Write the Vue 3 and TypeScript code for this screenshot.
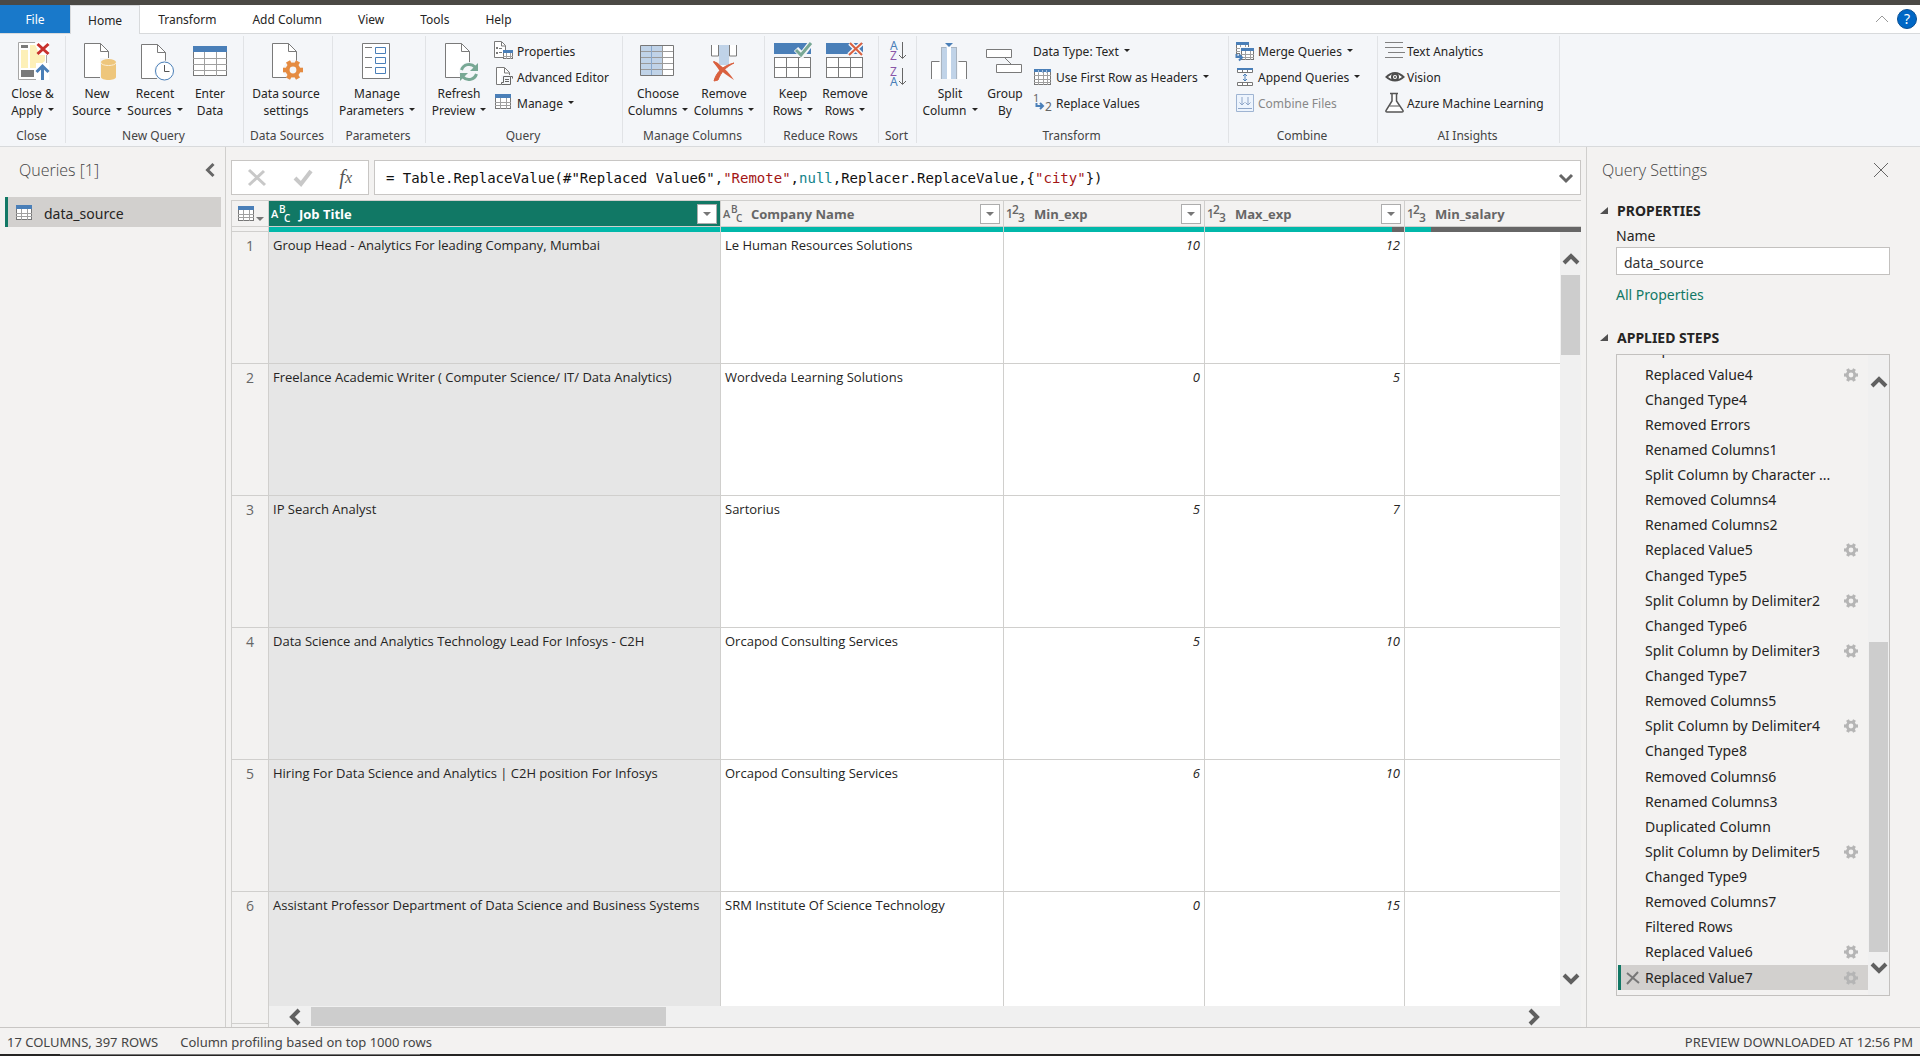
<script setup lang="ts">
import { ref } from 'vue'

interface BigButton { icon: string; lines: [string, string]; caret?: boolean; width: string }
interface SmallButton { icon?: string; label: string; caret?: boolean; disabled?: boolean }
interface Group { name: string; big?: BigButton[]; small?: SmallButton[]; sort?: boolean }
interface Column { name: string; kind: 'text' | 'number'; quality: string; filter: boolean }
interface Step { name: string; gear?: boolean }

const page = (x: number, y: number) =>
  `<path d="M${x + 0.5} ${y + 0.5}h16l8 8v26h-24z" fill="#fff" stroke="#7a7a7a"/><path d="M${x + 16.5} ${y + 0.5}v8h8" fill="none" stroke="#7a7a7a"/>`

const gear = (cx: number, cy: number, r: number, color: string) => {
  const tooth = r * 0.46
  const teeth = [0, 60, 120, 180, 240, 300]
    .map((a) => `<rect x="${cx + r * 0.5}" y="${cy - tooth / 2}" width="${r * 0.5}" height="${tooth}" transform="rotate(${a} ${cx} ${cy})" fill="${color}"/>`)
    .join('')
  return `${teeth}<circle cx="${cx}" cy="${cy}" r="${r * 0.54}" fill="none" stroke="${color}" stroke-width="${r * 0.4}"/>`
}

const sheet = (x: number, y: number, w: number, h: number, cols: number, rows: number) => {
  const head = Math.round(h / (rows + 1))
  let d = ''
  for (let i = 1; i < cols; i++) d += `M${Math.round(x + (w * i) / cols) + 0.5} ${y + head}V${y + h}`
  for (let i = 1; i < rows; i++) d += `M${x} ${Math.round(y + head + ((h - head) * i) / rows) + 0.5}h${w}`
  return `<rect x="${x + 0.5}" y="${y + 0.5}" width="${w - 1}" height="${h - 1}" fill="#fff" stroke="#777"/><path d="${d}" stroke="#a0a0a0" fill="none"/><rect x="${x}" y="${y}" width="${w}" height="${head}" fill="#4a7fb8"/>`
}

const grid3x2 = '<rect x="2.5" y="16.5" width="36" height="20" fill="#fff" stroke="#7a7a7a"/><path d="M14.5 16v20M26.5 16v20M2 26.5h36" stroke="#7a7a7a"/>'

const icons: Record<string, string> = {
  close: '<path d="M6.5 1.5h28v37h-28z" fill="#fff" stroke="#a6a6a6"/><rect x="9" y="4" width="7" height="3" fill="#7a7a7a"/><rect x="9" y="9" width="7" height="18" fill="#fdf0b8"/><path d="M18 4h5l4 6v4h6v6l-9 7h-6z" fill="#fdf0b8"/><rect x="9" y="29" width="13" height="7" fill="#7a7a7a"/><path d="M23 1h14v13H27zM24 22h13v17H24z" fill="#fff"/><path d="M25.500 3l11 10m0-10l-11 10" stroke="#c8322d" stroke-width="3"/><path d="M30.500 39V26M24.500 31l6-6 6 6" fill="none" stroke="#4a7fb8" stroke-width="3"/>',
  source: page(8, 2) + '<path d="M24 17h17v23H24z" fill="#f4f6f9"/><path d="M25 21v15c0 4 15 4 15 0V21z" fill="#eec67c"/><ellipse cx="32.500" cy="21" rx="7.500" ry="3" fill="#eec67c"/><path d="M25 21.500c0 4 15 4 15 0" stroke="#fbeed5" fill="none"/>',
  recent: page(7, 3) + '<circle cx="30.500" cy="30" r="10.500" fill="#f4f6f9"/><circle cx="30.500" cy="30" r="9" fill="#fff" stroke="#4a7fb8"/><path d="M30.500 24v6.500h5" fill="none" stroke="#555"/>',
  enter: sheet(4, 5, 34, 30, 3, 4),
  settings: page(7, 2) + '<circle cx="28" cy="29" r="10" fill="#f4f6f9"/>' + gear(28, 29, 10, '#e58b41'),
  params: '<path d="M6.500 2.500h27v35h-27z" fill="#fff" stroke="#7a7a7a"/><path d="M9 6.500h7M9 16.500h7M9 26.500h7" stroke="#7a7a7a"/><path d="M19.500 6.500h10v6h-10zM19.500 16.500h10v6h-10zM19.500 26.500h10v6h-10z" fill="#fff" stroke="#4a7fb8"/>',
  refresh: page(7, 2) + '<circle cx="31" cy="31" r="10" fill="#f4f6f9"/><path d="M23.500 29a8 8 0 0 1 13.500-3M38.500 33a8 8 0 0 1-13.500 3" fill="none" stroke="#78a895" stroke-width="3"/><path d="M40 22v8h-8zM22 40v-8h8z" fill="#78a895"/>',
  choose: '<path d="M3.500 4.500h33v30h-33z" fill="#fff" stroke="#777"/><path d="M4 5h22v29H4z" fill="#c0d3e8"/><path d="M4 10.500h32M4 16.500h32M4 22.500h32M4 28.500h32M25.500 5v29" stroke="#9a9a9a"/><path d="M14.500 5v29" stroke="#88a8cd"/>',
  removeCols: '<path d="M8.500 4v11h7V4M33.500 4v11h-7V4" fill="#fff" stroke="#7a7a7a"/><rect x="16" y="4" width="10" height="20" fill="#c0d3e8"/><path d="M10 21l1-1c7 4 14 10 20 19-8-5-16-11-21-18z" fill="#d9603f"/><path d="M31 22c-8 4-13 9-16 17l-4 1c2-8 8-15 20-18z" fill="#d9603f" stroke="#d9603f"/><path d="M10 20l5 2 5 8-2 2z" fill="#d9603f"/>',
  keepRows: '<rect x="2" y="2" width="37" height="11" fill="#4a7fb8"/>' + grid3x2 + '<path d="M24 8l6 6L39 2" fill="none" stroke="#f4f6f9" stroke-width="6"/><path d="M24 9l5 5L39 2" fill="none" stroke="#78a895" stroke-width="3"/>',
  removeRows: '<rect x="2" y="2" width="37" height="11" fill="#4a7fb8"/>' + grid3x2 + '<path d="M26 2l12 12m0-12L25 14" stroke="#f4f6f9" stroke-width="5"/><path d="M26 2l12 12m0-12L25 14" stroke="#d9603f" stroke-width="2"/>',
  split: '<path d="M3 21h8v17H3zM29 21h8v17h-8z" fill="#fff"/><path d="M2.500 38V20.500h8M37.500 38V20.500h-8" fill="none" stroke="#7a7a7a"/><rect x="12" y="6" width="6" height="32" fill="#c0d3e8"/><rect x="18" y="6" width="4" height="32" fill="#fff"/><rect x="22" y="6" width="6" height="32" fill="#c0d3e8"/><path d="M12 6.500h5M22 6.500h6M12.500 6v32M27.500 6v32" stroke="#a9b4c0"/><path d="M16 2h8l-4 4z" fill="#4a7fb8"/>',
  group: '<path d="M2.500 8.500h25v8h-25zM12.500 23.500h25v8h-25z" fill="#fff" stroke="#7a7a7a"/><path d="M21 17l6 6" stroke="#7a7a7a"/>',
  properties: '<path d="M.500.500h7l4 4v12h-11z" fill="#fff" stroke="#7a7a7a"/><path d="M7.500 1v4h4" fill="none" stroke="#7a7a7a"/><path d="M2 6h2v2H2zM2 11h2v2H2z" fill="#7a7a7a"/><path d="M5 7.500h3M5 11.500h3" stroke="#7a7a7a"/>' + sheet(9, 9, 10, 9, 3, 2),
  editor: '<path d="M2.500.500h8l5 5v12h-13z" fill="#fff" stroke="#7a7a7a"/><path d="M10.500 1v5h5" fill="none" stroke="#7a7a7a"/><path d="M7 8h12v11H7z" fill="#f4f6f9"/><path d="M9.500 9.500h7v8h-9v-2h2zM16.500 9.500h2v2M11 12.500h4M11 14.500h4" fill="none" stroke="#666"/>',
  table: sheet(1, 1, 16, 15, 3, 3),
  headers: sheet(1, 2, 17, 16, 4, 4) + '<path d="M5.500 3v3M9.500 3v3M13.500 3v3" stroke="#a9c2de"/>',
  replace: '<text x="0" y="9" font-size="11" fill="#666">1</text><text x="12" y="18" font-size="12" fill="#666">2</text><path d="M3.500 10v3h6M7 10l3 3-3 3" fill="none" stroke="#4a7fb8" stroke-width="2"/>',
  merge: sheet(1, 1, 13, 12, 3, 3) + '<path d="M5 6h14v14H5z" fill="#f4f6f9"/>' + sheet(6, 7, 13, 12, 3, 3) + '<path d="M1.500 13v3h4M4 13.500l3 3-3 3" fill="none" stroke="#4a7fb8" stroke-width="2"/>',
  append: '<path d="M2.500 2.500h15v3h-15zM2.500 15.500h15v3h-15z" fill="#fff" stroke="#777"/><rect x="2" y="1" width="16" height="2" fill="#4a7fb8"/><path d="M7.500 3v3M12.500 3v3M7.500 16v3M12.500 16v3" stroke="#777"/><path d="M10 7v7M8 9l2-2 2 2M8 12l2 2 2-2" fill="none" stroke="#4a7fb8"/>',
  combine: '<path d="M1.500 1.500h17v17h-17z" fill="#edf4fd" stroke="#9fb4d2"/><path d="M7 4v8M4.500 9.500L7 12l2.500-2.500M13 4v8M10.500 9.500L13 12l2.500-2.500M3 15.500h14" fill="none" stroke="#8fa6c8"/>',
  textlines: '<path d="M1 1.500h18M1 6.500h18M4 11.500h17M1 16.500h18" stroke="#808080"/>',
  vision: '<path d="M1 10Q11 0 21 10Q11 19 1 10z" fill="#4d4d4d"/><path d="M4 10Q11 3 18 10Q11 16 4 10z" fill="#fff"/><circle cx="11" cy="10" r="4" fill="#4d4d4d"/><circle cx="11" cy="10" r="2" fill="#fff"/><circle cx="11" cy="10" r="1" fill="#4d4d4d"/>',
  flask: '<path d="M6 .500h8M8 1v7l-6 9.500q-.5 1.500 1 1.500h15q1.500 0 1-1.500L12.500 8V1" fill="#fff" stroke="#555" stroke-width="1.500"/><path d="M5.500 13h10" stroke="#555"/>',
}

const tabs = ['Home', 'Transform', 'Add Column', 'View', 'Tools', 'Help']

const groups: Group[] = [
  { name: 'Close', big: [{ icon: 'close', lines: ['Close &', 'Apply'], caret: true, width: 'w62' }] },
  {
    name: 'New Query',
    big: [
      { icon: 'source', lines: ['New', 'Source'], caret: true, width: 'w58' },
      { icon: 'recent', lines: ['Recent', 'Sources'], caret: true, width: 'w58' },
      { icon: 'enter', lines: ['Enter', 'Data'], width: 'w52' },
    ],
  },
  { name: 'Data Sources', big: [{ icon: 'settings', lines: ['Data source', 'settings'], width: 'w80' }] },
  { name: 'Parameters', big: [{ icon: 'params', lines: ['Manage', 'Parameters'], caret: true, width: 'w84' }] },
  {
    name: 'Query',
    big: [{ icon: 'refresh', lines: ['Refresh', 'Preview'], caret: true, width: 'w62' }],
    small: [
      { icon: 'properties', label: 'Properties' },
      { icon: 'editor', label: 'Advanced Editor' },
      { icon: 'table', label: 'Manage', caret: true },
    ],
  },
  {
    name: 'Manage Columns',
    big: [
      { icon: 'choose', lines: ['Choose', 'Columns'], caret: true, width: 'w66' },
      { icon: 'removeCols', lines: ['Remove', 'Columns'], caret: true, width: 'w66' },
    ],
  },
  {
    name: 'Reduce Rows',
    big: [
      { icon: 'keepRows', lines: ['Keep', 'Rows'], caret: true, width: 'w52' },
      { icon: 'removeRows', lines: ['Remove', 'Rows'], caret: true, width: 'w52' },
    ],
  },
  { name: 'Sort', sort: true },
  {
    name: 'Transform',
    big: [
      { icon: 'split', lines: ['Split', 'Column'], caret: true, width: 'w62' },
      { icon: 'group', lines: ['Group', 'By'], width: 'w48' },
    ],
    small: [
      { label: 'Data Type: Text', caret: true },
      { icon: 'headers', label: 'Use First Row as Headers', caret: true },
      { icon: 'replace', label: 'Replace Values' },
    ],
  },
  {
    name: 'Combine',
    small: [
      { icon: 'merge', label: 'Merge Queries', caret: true },
      { icon: 'append', label: 'Append Queries', caret: true },
      { icon: 'combine', label: 'Combine Files', disabled: true },
    ],
  },
  {
    name: 'AI Insights',
    small: [
      { icon: 'textlines', label: 'Text Analytics' },
      { icon: 'vision', label: 'Vision' },
      { icon: 'flask', label: 'Azure Machine Learning' },
    ],
  },
]

const columns: Column[] = [
  { name: 'Job Title', kind: 'text', quality: '100%', filter: true },
  { name: 'Company Name', kind: 'text', quality: '100%', filter: true },
  { name: 'Min_exp', kind: 'number', quality: '100%', filter: true },
  { name: 'Max_exp', kind: 'number', quality: '94%', filter: true },
  { name: 'Min_salary', kind: 'number', quality: '15%', filter: false },
]

const rows: [string, string, string, string][] = [
  ['Group Head - Analytics For leading Company, Mumbai', 'Le Human Resources Solutions', '10', '12'],
  ['Freelance Academic Writer ( Computer Science/ IT/ Data Analytics)', 'Wordveda Learning Solutions', '0', '5'],
  ['IP Search Analyst', 'Sartorius', '5', '7'],
  ['Data Science and Analytics Technology Lead For Infosys - C2H', 'Orcapod Consulting Services', '5', '10'],
  ['Hiring For Data Science and Analytics | C2H position For Infosys', 'Orcapod Consulting Services', '6', '10'],
  ['Assistant Professor Department of Data Science and Business Systems', 'SRM Institute Of Science Technology', '0', '15'],
]

const steps: Step[] = [
  { name: 'Replaced Value3' },
  { name: 'Replaced Value4', gear: true },
  { name: 'Changed Type4' },
  { name: 'Removed Errors' },
  { name: 'Renamed Columns1' },
  { name: 'Split Column by Character ...' },
  { name: 'Removed Columns4' },
  { name: 'Renamed Columns2' },
  { name: 'Replaced Value5', gear: true },
  { name: 'Changed Type5' },
  { name: 'Split Column by Delimiter2', gear: true },
  { name: 'Changed Type6' },
  { name: 'Split Column by Delimiter3', gear: true },
  { name: 'Changed Type7' },
  { name: 'Removed Columns5' },
  { name: 'Split Column by Delimiter4', gear: true },
  { name: 'Changed Type8' },
  { name: 'Removed Columns6' },
  { name: 'Renamed Columns3' },
  { name: 'Duplicated Column' },
  { name: 'Split Column by Delimiter5', gear: true },
  { name: 'Changed Type9' },
  { name: 'Removed Columns7' },
  { name: 'Filtered Rows' },
  { name: 'Replaced Value6', gear: true },
  { name: 'Replaced Value7', gear: true },
]

const activeTab = ref('Home')
const selectedStep = ref(steps.length - 1)
const queryName = ref('data_source')
const stepGear = gear(7, 7, 7, '#b5b5b5')
const tableIcon = sheet(0, 0, 16, 15, 3, 3)
</script>

<template>
  <div class="app">
    <nav class="tabs">
      <button class="tab file">File</button>
      <button v-for="t in tabs" :key="t" class="tab" :class="{ active: t === activeTab }" @click="activeTab = t">{{ t }}</button>
      <span class="spacer"></span>
      <button class="plain fold" aria-label="Collapse ribbon">
        <svg width="14" height="8" viewBox="0 0 14 8"><path d="M1 7l6-6 6 6" fill="none" stroke="#999" /></svg>
      </button>
      <button class="help" aria-label="Help">?</button>
    </nav>

    <header class="ribbon">
      <section v-for="g in groups" :key="g.name" class="group">
        <div class="tools">
          <button v-for="b in g.big" :key="b.icon" class="big" :class="b.width">
            <svg width="42" height="42" viewBox="0 0 42 42" v-html="icons[b.icon]"></svg>
            <span>{{ b.lines[0] }}</span>
            <span>{{ b.lines[1] }}<i v-if="b.caret" class="caret"></i></span>
          </button>
          <div v-if="g.small" class="stack">
            <button v-for="s in g.small" :key="s.label" class="small" :disabled="s.disabled">
              <svg v-if="s.icon" width="21" height="20" viewBox="0 0 21 20" v-html="icons[s.icon]"></svg>
              <span>{{ s.label }}<i v-if="s.caret" class="caret"></i></span>
            </button>
          </div>
          <div v-if="g.sort" class="stack sort">
            <button class="small" aria-label="Sort ascending">
              <svg width="18" height="20" viewBox="0 0 18 20">
                <text x="1" y="9" font-size="12" fill="#4a7fb8">A</text><text x="1" y="19" font-size="12" fill="#8a56a8">Z</text>
                <path d="M13.500 1v16M10 14l3.500 3.500L17 14" fill="none" stroke="#666" />
              </svg>
            </button>
            <button class="small" aria-label="Sort descending">
              <svg width="18" height="20" viewBox="0 0 18 20">
                <text x="1" y="9" font-size="12" fill="#8a56a8">Z</text><text x="1" y="19" font-size="12" fill="#4a7fb8">A</text>
                <path d="M13.500 1v16M10 14l3.500 3.500L17 14" fill="none" stroke="#666" />
              </svg>
            </button>
          </div>
        </div>
        <div class="caption">{{ g.name }}</div>
      </section>
    </header>

    <main class="body">
      <aside class="queries">
        <div class="pane-head">
          <h2>Queries [1]</h2>
          <button class="plain" aria-label="Collapse queries">
            <svg width="10" height="14" viewBox="0 0 10 14"><path d="M8.500 1L2.500 7l6 6" fill="none" stroke="#666" stroke-width="3" /></svg>
          </button>
        </div>
        <button class="query">
          <svg width="16" height="15" viewBox="0 0 16 15" v-html="tableIcon"></svg>
          <span>data_source</span>
        </button>
      </aside>

      <section class="center">
        <div class="formula-row">
          <div class="formula-tools">
            <button class="plain" aria-label="Cancel">
              <svg width="20" height="18" viewBox="0 0 20 18"><path d="M2 1l16 15M17 2L2 16" stroke="#c8c8c8" stroke-width="3" /></svg>
            </button>
            <button class="plain" aria-label="Commit">
              <svg width="18" height="16" viewBox="0 0 18 16"><path d="M1 8l6 6L17 1" fill="none" stroke="#c8c8c8" stroke-width="4" /></svg>
            </button>
            <button class="plain fx" aria-label="Add step"><span class="f">f</span>x</button>
          </div>
          <div class="formula">
            <code>= Table.ReplaceValue(#"Replaced Value6",<span class="str">"Remote"</span>,<span class="key">null</span>,Replacer.ReplaceValue,{<span class="str">"city"</span>})</code>
            <button class="plain" aria-label="Expand formula">
              <svg width="14" height="10" viewBox="0 0 14 10"><path d="M1 2l6 6 6-6" fill="none" stroke="#666" stroke-width="3" /></svg>
            </button>
          </div>
        </div>

        <div class="data">
          <table>
            <colgroup>
              <col class="c-num" /><col class="c-job" /><col class="c-company" /><col class="c-exp" /><col class="c-exp" /><col />
            </colgroup>
            <thead>
              <tr>
                <th class="corner">
                  <div class="head">
                    <svg width="16" height="15" viewBox="0 0 16 15" v-html="tableIcon"></svg>
                    <i class="caret grey"></i>
                  </div>
                  <div class="gap"></div>
                </th>
                <th v-for="(c, i) in columns" :key="c.name" :class="{ picked: i === 0 }">
                  <div class="head">
                    <svg class="kind" width="20" height="20" viewBox="0 0 20 20">
                      <template v-if="c.kind === 'text'">
                        <text x="0" y="14">A</text><text class="sub" x="8" y="9">B</text><text class="sub" x="13" y="18">C</text>
                      </template>
                      <template v-else>
                        <text class="digit" x="0" y="14">1</text><text class="digit" x="6" y="10">2</text><text class="digit" x="12" y="18">3</text>
                      </template>
                    </svg>
                    <span class="label">{{ c.name }}</span>
                    <button v-if="c.filter" class="filter" :aria-label="'Filter ' + c.name"><i class="caret grey"></i></button>
                  </div>
                  <div class="quality"><div :style="{ width: c.quality }"></div></div>
                </th>
              </tr>
            </thead>
            <tbody>
              <tr v-for="(r, i) in rows" :key="i">
                <td class="rownum">{{ i + 1 }}</td>
                <td class="picked">{{ r[0] }}</td>
                <td>{{ r[1] }}</td>
                <td class="num">{{ r[2] }}</td>
                <td class="num">{{ r[3] }}</td>
                <td></td>
              </tr>
              <tr>
                <td class="rownum"></td><td class="picked"></td><td></td><td></td><td></td><td></td>
              </tr>
            </tbody>
          </table>
          <div class="vscroll">
            <svg width="16" height="12" viewBox="0 0 16 12"><path d="M1 10l7-7 7 7" fill="none" stroke="#606060" stroke-width="4" /></svg>
            <div class="vtrack"><div class="thumb"></div></div>
            <svg width="16" height="12" viewBox="0 0 16 12"><path d="M1 2l7 7 7-7" fill="none" stroke="#606060" stroke-width="4" /></svg>
          </div>
          <div class="hscroll">
            <svg width="12" height="16" viewBox="0 0 12 16"><path d="M10 1L3 8l7 7" fill="none" stroke="#606060" stroke-width="4" /></svg>
            <div class="htrack"><div class="thumb"></div></div>
            <svg width="12" height="16" viewBox="0 0 12 16"><path d="M2 1l7 7-7 7" fill="none" stroke="#606060" stroke-width="4" /></svg>
          </div>
        </div>
      </section>

      <aside class="settings">
        <div class="pane-head">
          <h2>Query Settings</h2>
          <button class="plain" aria-label="Close settings">
            <svg width="14" height="14" viewBox="0 0 14 14"><path d="M0 0l14 14M14 0L0 14" stroke="#666" /></svg>
          </button>
        </div>
        <h3><i class="twist"></i>PROPERTIES</h3>
        <div class="props">
          <label for="query-name">Name</label>
          <input id="query-name" v-model="queryName" type="text" />
          <a href="#">All Properties</a>
        </div>
        <h3><i class="twist"></i>APPLIED STEPS</h3>
        <div class="steps">
          <ul>
            <li v-for="(s, i) in steps" :key="s.name" :class="{ selected: i === selectedStep }" @click="selectedStep = i">
              <span class="remove">
                <svg v-if="i === selectedStep" width="12" height="12" viewBox="0 0 12 12"><path d="M0 1l12 10M11 0L0 12" stroke="#777" stroke-width="2" /></svg>
              </span>
              <span class="label">{{ s.name }}</span>
              <svg v-if="s.gear" width="14" height="14" viewBox="0 0 14 14" v-html="stepGear"></svg>
            </li>
          </ul>
          <div class="sscroll">
            <svg width="16" height="12" viewBox="0 0 16 12"><path d="M1 10l7-7 7 7" fill="none" stroke="#606060" stroke-width="4" /></svg>
            <div class="strack"><div class="thumb"></div></div>
            <svg width="16" height="12" viewBox="0 0 16 12"><path d="M1 2l7 7 7-7" fill="none" stroke="#606060" stroke-width="4" /></svg>
          </div>
        </div>
      </aside>
    </main>

    <footer class="status">
      <span>17 COLUMNS, 397 ROWS</span>
      <span>Column profiling based on top 1000 rows</span>
      <span class="right">PREVIEW DOWNLOADED AT 12:56 PM</span>
    </footer>
    <div class="edge"><div></div></div>
  </div>
</template>

<style>
body {
  margin: 0;
}
</style>

<style scoped>
* {
  box-sizing: border-box;
}
.app {
  height: 100vh;
  display: flex;
  flex-direction: column;
  overflow: hidden;
  border-top: 5px solid #4b4945;
  background: #f3f2f1;
  color: #252423;
  font-family: "Noto Sans", "Open Sans", sans-serif;
  font-size: 12px;
  white-space: nowrap;
}
button {
  font: inherit;
  color: inherit;
  border: 0;
  background: none;
  padding: 0;
}
svg {
  display: block;
  flex: none;
  overflow: visible;
}
.plain {
  display: flex;
  align-items: center;
  justify-content: center;
}
.spacer {
  flex: 1;
}
.caret {
  display: inline-block;
  margin-left: 5px;
  vertical-align: 4px;
  border: 3px solid transparent;
  border-top-color: currentColor;
  border-bottom: 0;
}
.caret.grey {
  margin: 0;
  border-width: 4px 4px 0;
  border-top-color: #777;
}

.tabs {
  display: flex;
  align-items: stretch;
  flex: none;
  height: 29px;
  background: #fff;
  border-bottom: 1px solid #d8dadc;
}
.tab {
  padding: 0 17px;
  border: 1px solid transparent;
  border-bottom: 0;
}
.tab.file {
  width: 70px;
  background: #1979ca;
  color: #fff;
}
.tab.active {
  background: #f4f6f9;
  border-color: #d8dadc;
  margin-bottom: -1px;
}
.help {
  align-self: center;
  width: 20px;
  height: 20px;
  margin: 0 3px 0 8px;
  border: 1px solid #0a4f94;
  border-radius: 50%;
  background: #0067c5;
  color: #fff;
  font-size: 14px;
  line-height: 18px;
}

.ribbon {
  flex: none;
  display: grid;
  grid-template-columns: 66px 178px 89px 93px 197px 142px 114px 38px 312px 149px 182px;
  height: 113px;
  padding: 2px 0 3px;
  background: #f4f6f9;
  border-bottom: 1px solid #d8dadc;
}
.group {
  display: flex;
  flex-direction: column;
  padding: 2px 2px 0;
  border-right: 1px solid #e1e3e6;
}
.tools {
  display: flex;
  flex: 1;
}
.caption {
  height: 16px;
  margin-right: 2px;
  line-height: 18px;
  text-align: center;
  color: #444;
}
.big {
  display: flex;
  flex-direction: column;
  align-items: center;
  align-self: flex-start;
  padding-top: 3px;
  line-height: 17px;
}
.big svg {
  margin-bottom: 2px;
}
.w48 { width: 48px; }
.w52 { width: 52px; }
.w58 { width: 58px; }
.w62 { width: 62px; }
.w66 { width: 66px; }
.w80 { width: 80px; }
.w84 { width: 84px; }
.stack {
  display: flex;
  flex-direction: column;
  align-items: flex-start;
  padding-left: 4px;
}
.small {
  display: flex;
  align-items: center;
  gap: 2px;
  height: 26px;
}
.small:disabled {
  color: #888;
}
.sort {
  padding-left: 8px;
}

.body {
  flex: 1;
  display: flex;
  min-height: 0;
}
.pane-head {
  display: flex;
  align-items: center;
  justify-content: space-between;
  height: 46px;
}
h2 {
  margin: 0;
  font-family: "Open Sans", "Noto Sans", sans-serif;
  font-size: 16px;
  font-weight: 300;
  color: #444;
}
.queries {
  width: 226px;
  flex: none;
  padding-left: 5px;
  padding-right: 4px;
  border-right: 1px solid #d0cfcd;
}
.queries .pane-head {
  padding: 0 6px 0 14px;
}
.query {
  display: flex;
  align-items: center;
  gap: 12px;
  width: 100%;
  height: 30px;
  margin-top: 4px;
  padding-left: 8px;
  border-left: 3px solid #117865;
  background: #d2d0ce;
  font-size: 14px;
}
.query span {
  padding-top: 2px;
}

.center {
  flex: 1;
  min-width: 0;
  display: flex;
  flex-direction: column;
  padding: 13px 5px 0;
}
.formula-row {
  display: flex;
  gap: 5px;
  flex: none;
  height: 35px;
  margin-bottom: 5px;
}
.formula-tools,
.formula {
  display: flex;
  align-items: center;
  border: 1px solid #c8c6c4;
  background: #fff;
}
.formula-tools {
  width: 138px;
  justify-content: space-between;
  padding: 0 16px 0 15px;
}
.fx {
  font-family: "Liberation Serif", serif;
  font-style: italic;
  font-size: 16px;
  color: #555;
}
.fx .f {
  font-size: 20px;
}
.formula {
  flex: 1;
  min-width: 0;
  justify-content: space-between;
  padding: 0 7px 0 11px;
}
code {
  font-family: "DejaVu Sans Mono", "Liberation Mono", monospace;
  font-size: 14px;
  color: #111;
}
.str {
  color: #a31515;
}
.key {
  color: #11838a;
}

.data {
  position: relative;
  flex: 1;
  min-height: 0;
  overflow: hidden;
  border: 1px solid #d0cfcd;
  border-width: 1px 0 0 1px;
  font-family: "Open Sans", "Noto Sans", sans-serif;
  font-size: 13px;
}
table {
  width: 100%;
  table-layout: fixed;
  border-collapse: separate;
  border-spacing: 0;
}
.c-num { width: 37px; }
.c-job { width: 452px; }
.c-company { width: 283px; }
.c-exp { width: 201px; }
.c-exp + .c-exp { width: 200px; }
th {
  padding: 0;
  background: #f3f2f1;
  border-right: 1px solid #d0cfcd;
  color: #666;
  text-align: left;
  font-weight: 700;
}
th:last-child {
  border-right: 0;
}
th.picked {
  background: #117865;
  color: #fff;
}
.head {
  display: flex;
  align-items: center;
  height: 26px;
  padding-left: 2px;
  border-bottom: 1px solid #d0cfcd;
}
.corner .head {
  padding-left: 6px;
  gap: 2px;
}
.corner .caret {
  margin-top: 10px;
}
.gap {
  height: 5px;
  border-bottom: 1px solid #d0cfcd;
}
.kind {
  margin-right: 8px;
}
.kind text {
  font-size: 11px;
  font-weight: 600;
  fill: currentColor;
}
.kind .sub {
  font-size: 10px;
}
.kind .digit {
  font-size: 12px;
}
.head .label {
  flex: 1;
}
.filter {
  display: flex;
  align-items: center;
  justify-content: center;
  width: 20px;
  height: 20px;
  margin-right: 3px;
  border: 1px solid #adadad;
  background: #fff;
}
.quality {
  height: 5px;
  background: #666;
}
.quality div {
  height: 5px;
  background: #01b8aa;
}
td {
  height: 132px;
  padding: 5px 4px;
  vertical-align: top;
  line-height: 17px;
  background: #fff;
  border: 1px solid #d0cfcd;
  border-width: 0 1px 1px 0;
}
td.rownum {
  background: #f3f2f1;
  color: #666;
  text-align: center;
  font-size: 14px;
}
td.picked {
  background: #e6e6e6;
}
td.num {
  text-align: right;
  font-style: italic;
}
.thumb {
  background: #cdcdcd;
}
.vscroll {
  position: absolute;
  top: 31px;
  right: 0;
  bottom: 0;
  width: 21px;
  display: flex;
  flex-direction: column;
  align-items: center;
  padding: 21px 1px 42px;
  background: #f0f0f0;
}
.vtrack {
  flex: 1;
  width: 100%;
  padding-top: 10px;
}
.vtrack .thumb {
  height: 80px;
}
.hscroll {
  position: absolute;
  left: 37px;
  right: 0;
  bottom: 0;
  height: 21px;
  display: flex;
  align-items: center;
  padding: 0 41px 0 20px;
  background: #f0f0f0;
}
.htrack {
  flex: 1;
  padding-left: 10px;
}
.htrack .thumb {
  width: 355px;
  height: 19px;
}

.settings {
  width: 334px;
  flex: none;
  display: flex;
  flex-direction: column;
  padding: 0 30px 31px 15px;
  border-left: 1px solid #d0cfcd;
  font-size: 14px;
}
.settings .pane-head {
  padding-right: 2px;
}
h3 {
  display: flex;
  align-items: center;
  gap: 9px;
  flex: none;
  height: 20px;
  margin: 7px 0 0;
  font-size: 14px;
  font-weight: 700;
}
.twist {
  width: 0;
  height: 0;
  margin-left: -2px;
  border-left: 8px solid transparent;
  border-bottom: 7px solid #505050;
}
.props {
  display: flex;
  flex-direction: column;
  align-items: flex-start;
  padding: 5px 0 15px 14px;
}
.props label {
  line-height: 22px;
}
.props input {
  width: 100%;
  height: 28px;
  padding: 3px 7px 0;
  border: 1px solid #c3c1bf;
  background: #fff;
  color: #333;
  font: inherit;
}
.props a {
  margin-top: 10px;
  line-height: 20px;
  color: #117865;
  text-decoration: none;
}
.steps {
  display: flex;
  flex: 1;
  min-height: 0;
  margin: 7px 0 0 14px;
  border: 1px solid #c3c1bf;
}
ul {
  flex: 1;
  min-width: 0;
  margin: 0;
  padding: 0 0 5px 1px;
  list-style: none;
  display: flex;
  flex-direction: column;
  justify-content: flex-end;
  overflow: hidden;
}
li {
  display: flex;
  align-items: center;
  flex: none;
  height: 25px;
  padding-right: 10px;
  border-left: 3px solid transparent;
}
li:nth-child(8n + 1) {
  margin-bottom: 1px;
}
li.selected {
  border-left-color: #117865;
  background: #d2d0ce;
}
.remove {
  width: 24px;
  padding-left: 6px;
}
li .label {
  flex: 1;
}
.sscroll {
  display: flex;
  flex-direction: column;
  align-items: center;
  width: 21px;
  padding: 21px 1px;
  background: #f0f0f0;
}
.strack {
  flex: 1;
  width: 100%;
  display: flex;
  flex-direction: column;
  justify-content: flex-end;
  padding-bottom: 10px;
}
.strack .thumb {
  height: 310px;
}

.status {
  flex: none;
  display: flex;
  align-items: center;
  gap: 22px;
  height: 27px;
  padding: 1px 7px 0;
  border-top: 1px solid #c8c6c4;
  font-size: 13px;
  color: #444;
}
.status .right {
  margin-left: auto;
}
.edge {
  flex: none;
  height: 2px;
  padding-left: 60px;
  background: #252423;
}
.edge div {
  width: 360px;
  height: 1px;
  background: #777;
}
</style>
